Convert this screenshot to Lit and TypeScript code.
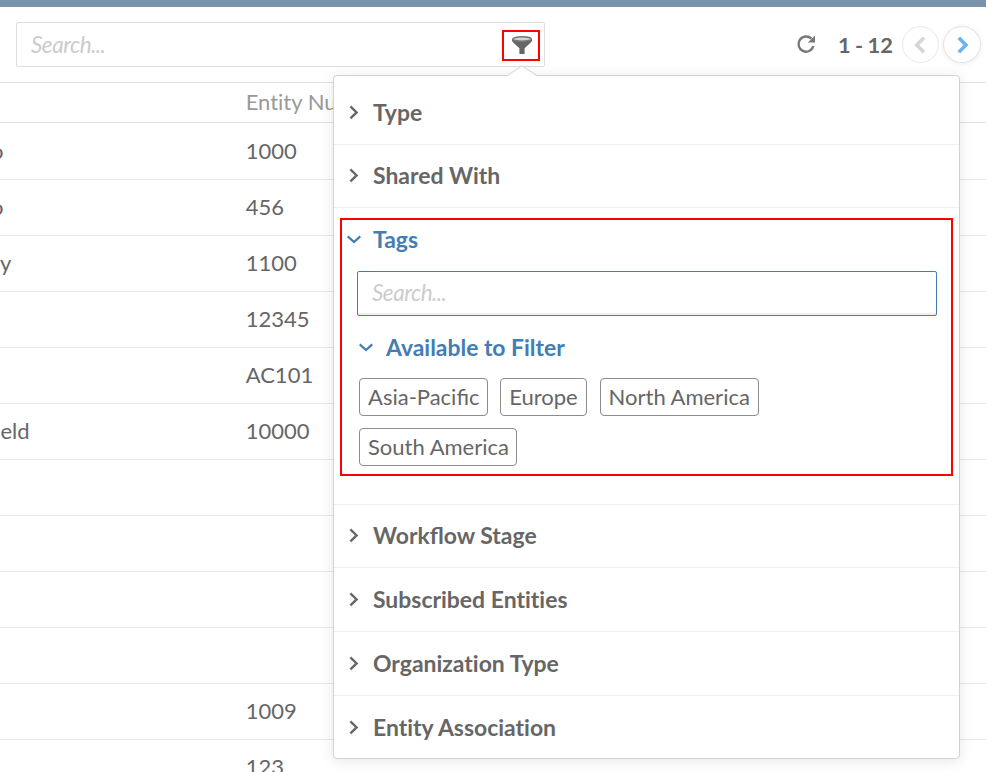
import { LitElement, html, css, svg } from "lit";
import { customElement } from "lit/decorators.js";
import { styleMap } from "lit/directives/style-map.js";

interface Row {
  name: string;
  indent: number;
  num: string;
}

const ROWS: Row[] = [
  { name: "o", indent: -9, num: "1000" },
  { name: "o", indent: -9, num: "456" },
  { name: "y", indent: 0, num: "1100" },
  { name: "", indent: 0, num: "12345" },
  { name: "", indent: 0, num: "AC101" },
  { name: "eld", indent: 0.4, num: "10000" },
  { name: "", indent: 0, num: "" },
  { name: "", indent: 0, num: "" },
  { name: "", indent: 0, num: "" },
  { name: "", indent: 0, num: "" },
  { name: "", indent: 0, num: "1009" },
  { name: "", indent: 0, num: "123" },
];

const TAGS = ["Asia-Pacific", "Europe", "North America", "South America"];

const chevronRight = html`<svg class="chev" width="14" height="16" viewBox="0 0 14 16">
  ${svg`<path d="M3.4 1.4 L9.6 7.4 L3.4 13.4" fill="none" stroke="currentColor" stroke-width="2.4" />`}
</svg>`;

const chevronDown = html`<svg class="chev" width="14" height="16" viewBox="0 0 14 16">
  ${svg`<path d="M0.7 4.4 L7 10 L13.3 4.4" fill="none" stroke="currentColor" stroke-width="2.3" />`}
</svg>`;

@customElement("app-root")
export class AppRoot extends LitElement {
  static styles = css`
    :host {
      display: block;
      position: relative;
      width: 986px;
      height: 772px;
      overflow: hidden;
      background: #fff;
      font-family: Lato, sans-serif;
      font-size: 22px;
      color: #666;
    }
    * {
      box-sizing: border-box;
    }
    .topbar {
      height: 7px;
      background: #7a93ac;
    }
    .toolbar {
      display: flex;
      align-items: flex-start;
      justify-content: space-between;
      height: 75px;
      padding: 15px 5px 0 16px;
    }
    .search {
      display: flex;
      align-items: center;
      justify-content: space-between;
      width: 529px;
      height: 45px;
      padding: 0 4px 0 14px;
      border: 1px solid #ddd;
      border-radius: 2px;
    }
    .placeholder {
      font-style: italic;
      color: #ccc;
      font-size: 22.5px;
      letter-spacing: -0.5px;
      line-height: 26px;
    }
    .filter {
      display: flex;
      justify-content: center;
      width: 38px;
      height: 31px;
      margin-top: 2px;
      padding: 4px 0 0 1px;
      border: 2px solid #f00;
    }
    .pager {
      display: flex;
      align-items: center;
      padding-top: 4px;
    }
    .range {
      font-size: 21.8px;
      font-weight: 700;
      width: 64px;
      margin-left: 22px;
      line-height: 26px;
      white-space: nowrap;
      word-spacing: -0.9px;
    }
    .round {
      display: flex;
      align-items: center;
      justify-content: center;
      width: 38px;
      height: 37px;
      border: 1px solid #e2e2e2;
      border-radius: 50%;
      color: #6bb3ee;
      box-shadow: 0 1px 5px rgba(0, 0, 0, 0.08);
      margin-left: 4px;
    }
    .round.off {
      width: 37px;
      margin-left: 0;
      color: #d6d6d6;
      border-color: #e8e8e8;
      box-shadow: none;
    }
    .refresh {
      margin-top: -1px;
    }
    .table {
      border-top: 1px solid #e0e0e0;
    }
    .row {
      display: grid;
      grid-template-columns: 245.7px 1fr;
      align-items: center;
      height: 56px;
      padding-bottom: 1px;
      border-bottom: 1px solid #e9e9e9;
      line-height: 26px;
      white-space: nowrap;
    }
    .row.first {
      height: 57px;
    }
    .row.head {
      height: 40px;
      padding-bottom: 2px;
      color: #999;
      border-bottom-color: #e0e0e0;
      font-variant-ligatures: none;
    }
    .popup {
      position: absolute;
      left: 333px;
      top: 75px;
      width: 627px;
      height: 684px;
      background: #fff;
      border: 1px solid #d2d2d2;
      border-radius: 4px;
      box-shadow: 0 2px 14px rgba(0, 0, 0, 0.1);
    }
    .arrow {
      position: absolute;
      left: 172px;
      top: -11px;
      display: block;
    }
    .section {
      display: flex;
      align-items: center;
      height: 63px;
      padding-left: 13px;
      border-bottom: 1px solid #efefef;
      font-size: 22.95px;
      font-weight: 700;
      line-height: 26px;
    }
    .label {
      margin-bottom: 2px;
    }
    .section.top {
      height: 69px;
      padding-top: 6px;
    }
    .section.tall {
      height: 64px;
      font-variant-ligatures: none;
    }
    .section.last {
      border-bottom: 0;
    }
    .chev {
      flex: none;
      margin-right: 12px;
    }
    .tags {
      height: 297px;
      padding-top: 19px;
      border-bottom: 1px solid #efefef;
    }
    .title {
      display: flex;
      align-items: center;
      height: 26px;
      padding-left: 13px;
      font-size: 22.9px;
      font-weight: 700;
      line-height: 26px;
      color: #437db3;
    }
    .field {
      display: flex;
      align-items: center;
      width: 580px;
      height: 45px;
      margin: 18px 0 19px 23px;
      padding: 0 0 1px 14px;
      border: 1px solid #437db3;
      border-radius: 2px;
      box-shadow: inset 0 -2px 0 #f0f0f0;
    }
    .title.sub {
      padding-left: 25px;
    }
    .title.sub .chev {
      margin-right: 13px;
    }
    .chips {
      display: flex;
      flex-wrap: wrap;
      gap: 12px;
      margin: 17px 150px 0 25px;
    }
    .chip {
      height: 38px;
      padding: 0 8px;
      border: 1px solid #8c8c8c;
      border-radius: 4px;
      line-height: 36px;
      white-space: nowrap;
    }
    .chip:nth-child(2) {
      margin-left: -0.3px;
    }
    .chip:nth-child(3) {
      margin-left: 0.9px;
    }
    .chip:nth-child(4) {
      padding-right: 7.4px;
    }
    .mark {
      position: absolute;
      left: 340px;
      top: 218px;
      width: 613px;
      height: 258px;
      border: 2px solid #f00;
    }
  `;

  render() {
    return html`
      <div class="topbar"></div>
      <div class="toolbar">
        <div class="search">
          <span class="placeholder">Search...</span>
          <span class="filter">
            <svg width="20" height="19" viewBox="0 0 20 19">
              <path d="M0 3.2 L0 4.8 Q0.3 6 7.4 12.2 L7.4 18 L12.6 18 L12.6 12.2 Q19.7 6 20 4.8 L20 3.2 Z" fill="#666" />
              <ellipse cx="10" cy="3" rx="9.3" ry="2.2" fill="#d2d2d2" stroke="#777" stroke-width="1.4" />
            </svg>
          </span>
        </div>
        <div class="pager">
          <svg class="refresh" width="20" height="20" viewBox="0 0 20 20">
            <path d="M15.4 4.6 A7.6 7.6 0 1 0 17.4 12.2" fill="none" stroke="#777" stroke-width="2.4" />
            <path d="M19 1.5 L19 8.6 L11.9 8.6 Z" fill="#777" />
          </svg>
          <span class="range">1 - 12</span>
          <span class="round off">
            <svg width="14" height="18" viewBox="0 0 14 18"><path d="M9.9 1.8 L2.8 9 L9.9 16.2" fill="none" stroke="currentColor" stroke-width="3.6" /></svg>
          </span>
          <span class="round">
            <svg width="14" height="18" viewBox="0 0 14 18"><path d="M3.8 1.8 L10.9 9 L3.8 16.2" fill="none" stroke="currentColor" stroke-width="3.6" /></svg>
          </span>
        </div>
      </div>
      <div class="table">
        <div class="row head"><span></span><span>Entity Nu</span></div>
        ${ROWS.map(
          (r, i) => html`<div class="row ${i === 0 ? "first" : ""}">
            <span style=${styleMap({ textIndent: `${r.indent}px` })}>${r.name}</span><span>${r.num}</span>
          </div>`
        )}
      </div>
      <div class="popup">
        <svg class="arrow" width="32" height="12" viewBox="0 0 32 12">
          <path d="M1 12 L1 11 L16 0.8 L31 11 L31 12 Z" fill="#fff" />
          <path d="M1 10.8 L16 0.8 L31 10.8" fill="none" stroke="#d2d2d2" />
        </svg>
        <div class="section top">${chevronRight}<span class="label">Type</span></div>
        <div class="section">${chevronRight}<span class="label">Shared With</span></div>
        <div class="tags">
          <div class="title">${chevronDown}<span class="label">Tags</span></div>
          <div class="field"><span class="placeholder">Search...</span></div>
          <div class="title sub">${chevronDown}<span class="label">Available to Filter</span></div>
          <div class="chips">${TAGS.map((t) => html`<span class="chip">${t}</span>`)}</div>
        </div>
        <div class="section">${chevronRight}<span class="label">Workflow Stage</span></div>
        <div class="section tall">${chevronRight}<span class="label">Subscribed Entities</span></div>
        <div class="section tall">${chevronRight}<span class="label">Organization Type</span></div>
        <div class="section tall last">${chevronRight}<span class="label">Entity Association</span></div>
      </div>
      <div class="mark"></div>
    `;
  }
}
